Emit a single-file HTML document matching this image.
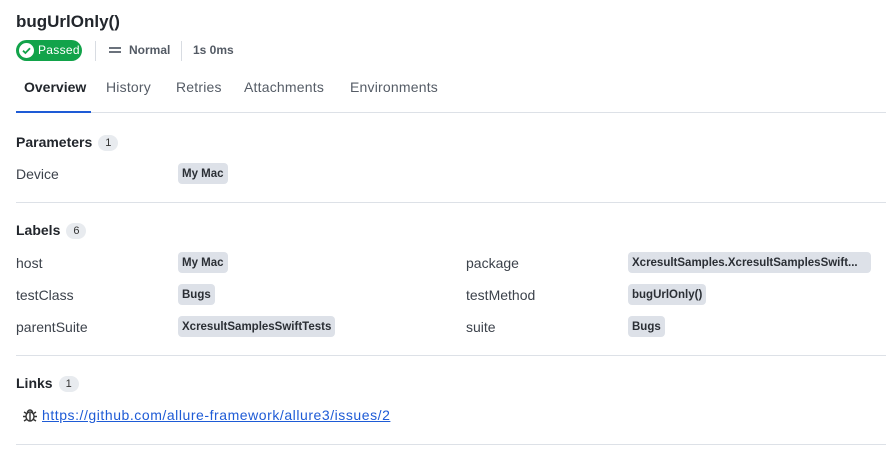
<!DOCTYPE html>
<html><head><meta charset="utf-8"><style>
*{margin:0;padding:0;box-sizing:border-box}
body{width:886px;height:463px;background:#fff;font-family:"Liberation Sans",sans-serif;color:#2a2f36;position:relative;overflow:hidden}
.a{position:absolute;white-space:nowrap}
.t{font-size:17px;font-weight:bold;left:16px;top:12px;color:#22262c}
.badge{left:16px;top:40px;height:21px;width:66px;background:#12a34a;border-radius:11px;color:#fff;font-size:12px;line-height:21px;padding-left:22px;letter-spacing:0.3px}
.badge .c{position:absolute;left:3px;top:3px;width:15px;height:15px;border-radius:50%;background:#fff}
.vs{width:1px;height:20px;background:#d8dce2;top:41px}
.sm{font-size:12px;color:#535a64;top:43px;font-weight:bold}
.tab{font-size:14px;color:#555c66;top:79px;letter-spacing:0.2px}
.hr{left:16px;right:0;height:1px;background:#dde1e7}
.h{font-size:14px;font-weight:bold;color:#22262c}
.cnt{display:inline-block;font-size:11px;background:#e8ebef;border-radius:9px;padding:0 7px;height:16px;line-height:16px;margin-left:6px;vertical-align:1px;color:#333;font-weight:normal}
.k{font-size:14px;color:#3c424b}
.tag{font-size:11.5px;font-weight:bold;background:#dde1e8;border-radius:4px;height:21px;line-height:22px;padding:0 4px;color:#2b2f35}
</style></head><body>
<div class="a t">bugUrlOnly()</div>
<div class="a badge"><span class="c"><svg width="15" height="15" viewBox="0 0 15 15"><path d="M4 7.7l2.4 2.3 4.6-4.8" stroke="#12a34a" stroke-width="1.8" fill="none"/></svg></span>Passed</div>
<div class="a vs" style="left:95px"></div>
<div class="a" style="left:109px;top:47px;width:12px;height:2px;background:#6b727c"></div>
<div class="a" style="left:109px;top:51px;width:12px;height:2px;background:#6b727c"></div>
<div class="a sm" style="left:129px">Normal</div>
<div class="a vs" style="left:181px"></div>
<div class="a sm" style="left:193px">1s 0ms</div>
<div class="a tab" style="left:24px;color:#22262c;font-weight:bold;letter-spacing:0">Overview</div>
<div class="a tab" style="left:106px">History</div>
<div class="a tab" style="left:176px">Retries</div>
<div class="a tab" style="left:244px">Attachments</div>
<div class="a tab" style="left:350px">Environments</div>
<div class="a hr" style="top:112px"></div>
<div class="a" style="left:16px;top:111px;width:75px;height:2px;background:#1e5bd6"></div>

<div class="a h" style="left:16px;top:134px">Parameters<span class="cnt">1</span></div>
<div class="a k" style="left:16px;top:166px">Device</div>
<div class="a tag" style="left:178px;top:163px">My Mac</div>
<div class="a hr" style="top:202px"></div>

<div class="a h" style="left:16px;top:222px">Labels<span class="cnt">6</span></div>
<div class="a k" style="left:16px;top:255px">host</div>
<div class="a tag" style="left:178px;top:252px">My Mac</div>
<div class="a k" style="left:16px;top:287px">testClass</div>
<div class="a tag" style="left:178px;top:284px">Bugs</div>
<div class="a k" style="left:16px;top:319px">parentSuite</div>
<div class="a tag" style="left:178px;top:316px">XcresultSamplesSwiftTests</div>
<div class="a k" style="left:466px;top:255px">package</div>
<div class="a tag" style="left:628px;top:252px;width:243px;overflow:hidden">XcresultSamples.XcresultSamplesSwift...</div>
<div class="a k" style="left:466px;top:287px">testMethod</div>
<div class="a tag" style="left:628px;top:284px">bugUrlOnly()</div>
<div class="a k" style="left:466px;top:319px">suite</div>
<div class="a tag" style="left:628px;top:316px">Bugs</div>
<div class="a hr" style="top:355px"></div>

<div class="a h" style="left:16px;top:375px">Links<span class="cnt">1</span></div>
<svg class="a" style="left:22px;top:407px" width="16" height="16" viewBox="0 0 16 16" fill="none" stroke="#333" stroke-width="1.4"><ellipse cx="8" cy="9.5" rx="4" ry="4.5"/><path d="M5.5 5.5a2.5 2.5 0 0 1 5 0M4 9.5H1M15 9.5h-3M4.5 6.5L2 5M11.5 6.5L14 5M4.5 12.5L2 14M11.5 12.5L14 14M8 6v8"/></svg>
<div class="a" style="left:42px;top:407px;font-size:14px;color:#1e5bd6;text-decoration:underline;letter-spacing:0.55px">https://github.com/allure-framework/allure3/issues/2</div>
<div class="a hr" style="top:444px"></div>
</body></html>
